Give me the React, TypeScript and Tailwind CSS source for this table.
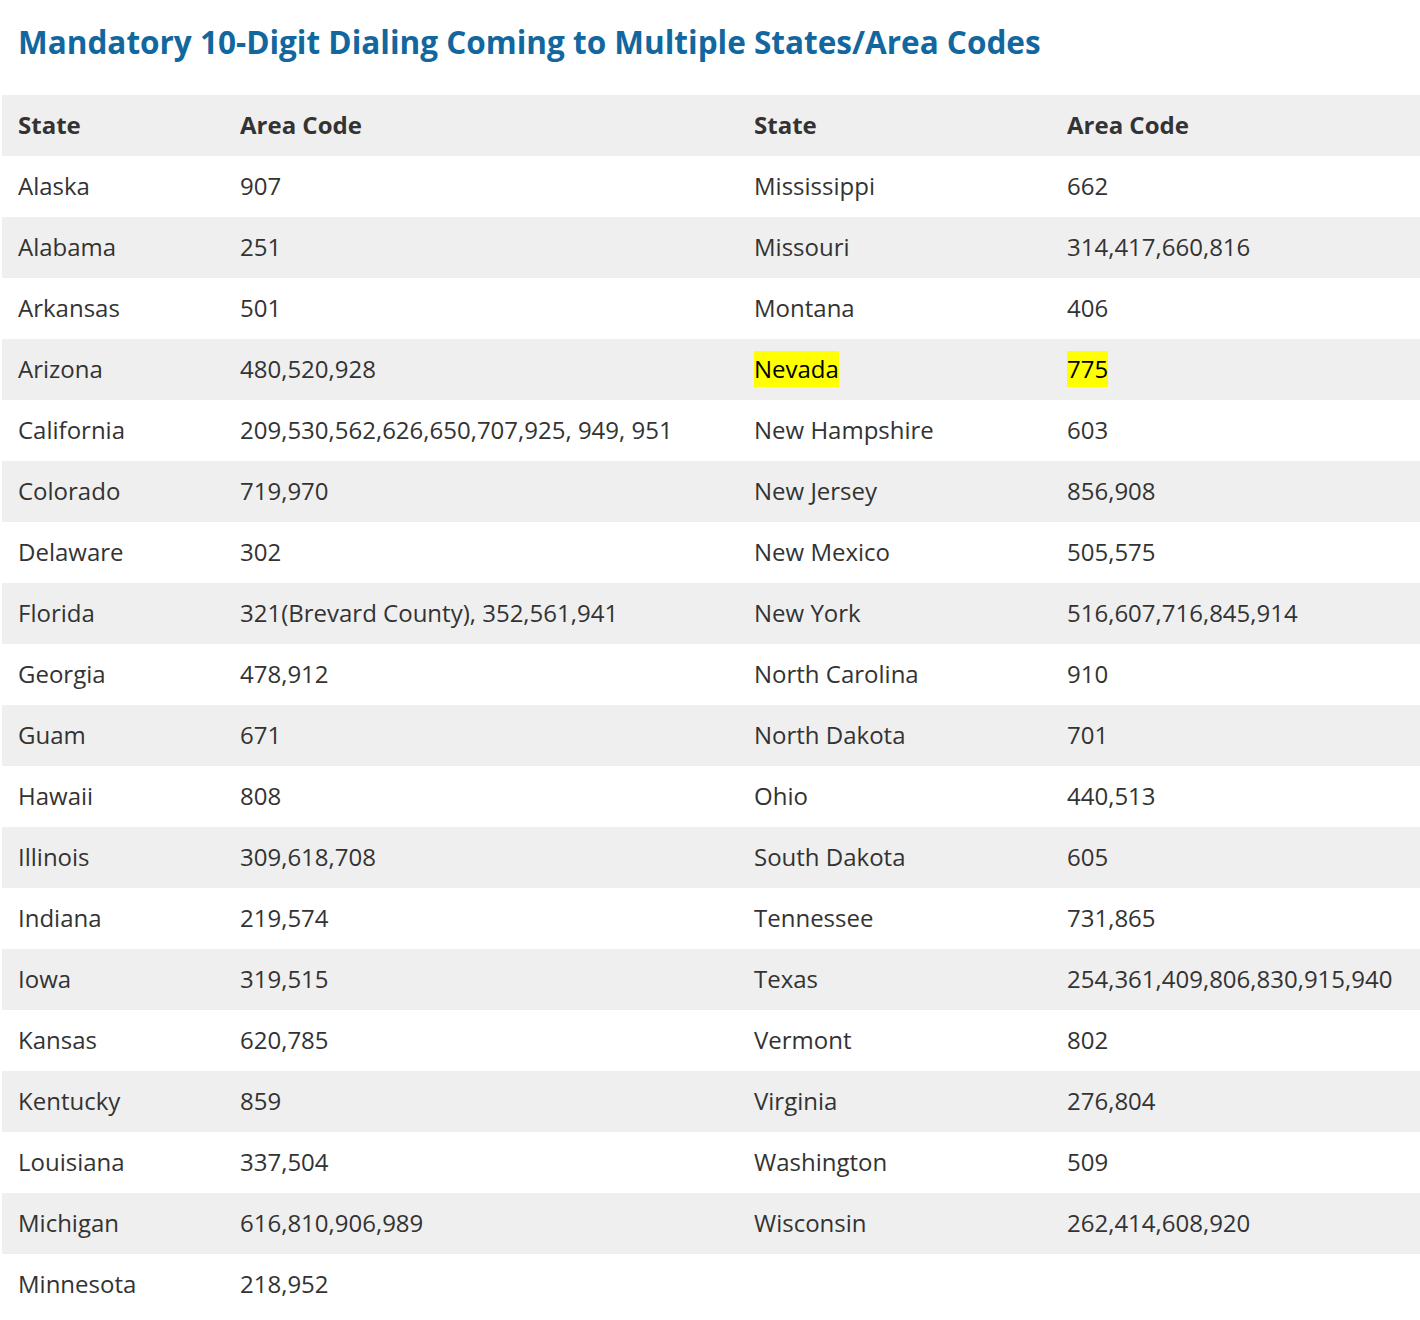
const rows: [string, string, string, string][] = [
  ['Alaska', '907', 'Mississippi', '662'],
  ['Alabama', '251', 'Missouri', '314,417,660,816'],
  ['Arkansas', '501', 'Montana', '406'],
  ['Arizona', '480,520,928', 'Nevada', '775'],
  ['California', '209,530,562,626,650,707,925, 949, 951', 'New Hampshire', '603'],
  ['Colorado', '719,970', 'New Jersey', '856,908'],
  ['Delaware', '302', 'New Mexico', '505,575'],
  ['Florida', '321(Brevard County), 352,561,941', 'New York', '516,607,716,845,914'],
  ['Georgia', '478,912', 'North Carolina', '910'],
  ['Guam', '671', 'North Dakota', '701'],
  ['Hawaii', '808', 'Ohio', '440,513'],
  ['Illinois', '309,618,708', 'South Dakota', '605'],
  ['Indiana', '219,574', 'Tennessee', '731,865'],
  ['Iowa', '319,515', 'Texas', '254,361,409,806,830,915,940'],
  ['Kansas', '620,785', 'Vermont', '802'],
  ['Kentucky', '859', 'Virginia', '276,804'],
  ['Louisiana', '337,504', 'Washington', '509'],
  ['Michigan', '616,810,906,989', 'Wisconsin', '262,414,608,920'],
  ['Minnesota', '218,952', '', ''],
]

const cols = 'grid grid-cols-[222px_514px_313px_369px]'

function Cell({ text, highlight }: { text: string, highlight?: boolean }) {
  return (
    <div className="flex items-center pb-[2px] pl-4 whitespace-nowrap">
      {highlight ? <span className="bg-[#ffff00] text-black">{text}</span> : text}
    </div>
  )
}

export default function App() {
  return (
    <div className="min-h-[1320px] bg-white pt-[22px] font-['Open_Sans',sans-serif] text-[#333333]">
      <h1 className="pl-[18px] text-[31.5px] leading-[40px] font-bold text-[#11679e]">
        Mandatory 10-Digit Dialing Coming to Multiple States/Area Codes
      </h1>
      <div className="ml-[2px] mt-[33px] w-[1418px] text-[24px]">
        <div className={`${cols} h-[61px] bg-[#efefef] font-bold`}>
          <Cell text="State" />
          <Cell text="Area Code" />
          <Cell text="State" />
          <Cell text="Area Code" />
        </div>
        {rows.map((r, i) => (
          <div key={r[0]} className={`${cols} h-[61px] ${i % 2 === 1 ? 'bg-[#efefef]' : 'bg-white'}`}>
            <Cell text={r[0]} />
            <Cell text={r[1]} />
            <Cell text={r[2]} highlight={r[2] === 'Nevada'} />
            <Cell text={r[3]} highlight={r[2] === 'Nevada'} />
          </div>
        ))}
      </div>
    </div>
  )
}
